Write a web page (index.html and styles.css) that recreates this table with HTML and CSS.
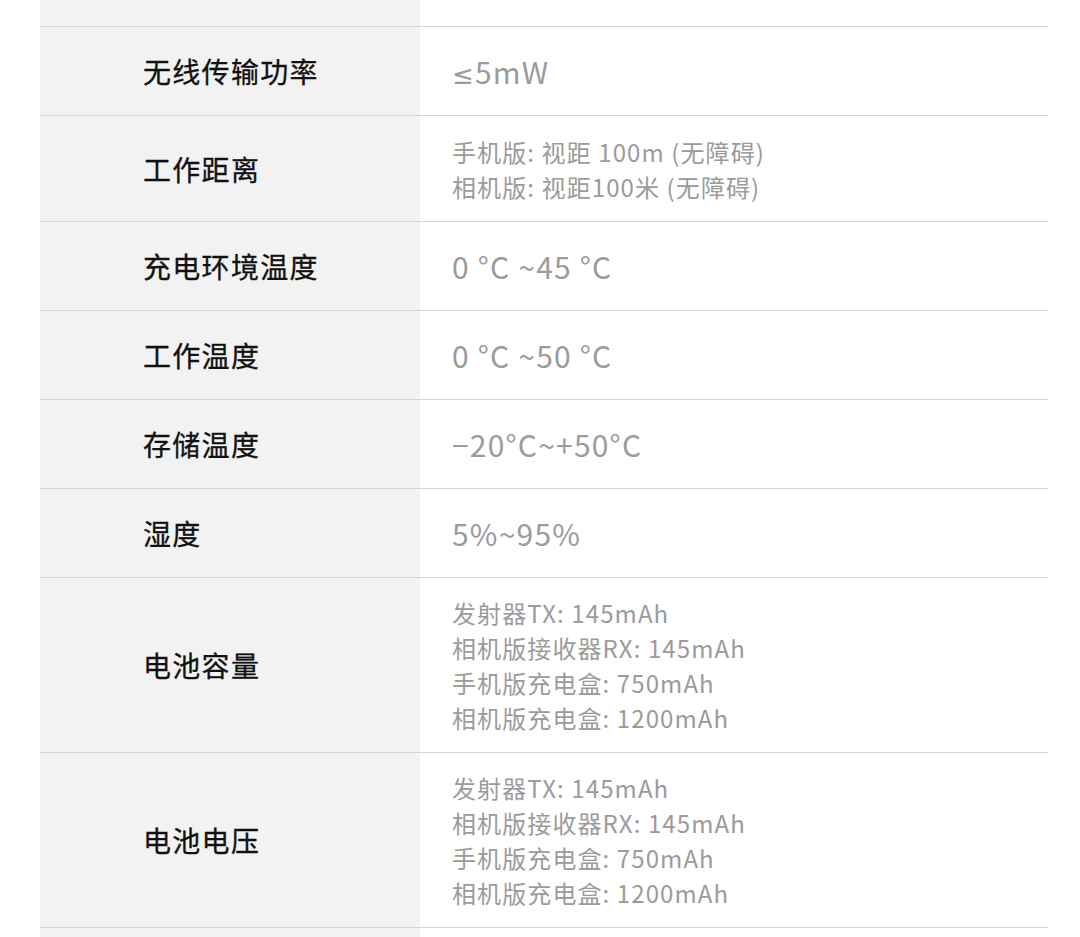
FILE: index.html
```html
<!DOCTYPE html>
<html lang="zh-CN">
<head>
<meta charset="utf-8">
<title>规格参数</title>
<link rel="stylesheet" href="styles.css">
</head>
<body>
<div class="specs">
  <div class="row row-top">
    <div class="label"></div>
    <div class="value"></div>
  </div>
  <div class="row">
    <div class="label">无线传输功率</div>
    <div class="value value-lg"><span><span class="sym">≤</span>5mW</span></div>
  </div>
  <div class="row row-2">
    <div class="label">工作距离</div>
    <div class="value value-sm">
      <div>手机版: 视距 100m (无障碍)</div>
      <div>相机版: 视距100米 (无障碍)</div>
    </div>
  </div>
  <div class="row">
    <div class="label">充电环境温度</div>
    <div class="value value-lg">0 °C ~45 °C</div>
  </div>
  <div class="row">
    <div class="label">工作温度</div>
    <div class="value value-lg">0 °C ~50 °C</div>
  </div>
  <div class="row">
    <div class="label">存储温度</div>
    <div class="value value-lg">−20°C~+50°C</div>
  </div>
  <div class="row">
    <div class="label">湿度</div>
    <div class="value value-lg">5%~95%</div>
  </div>
  <div class="row row-4">
    <div class="label">电池容量</div>
    <div class="value value-sm">
      <div>发射器TX: 145mAh</div>
      <div>相机版接收器RX: 145mAh</div>
      <div>手机版充电盒: 750mAh</div>
      <div>相机版充电盒: 1200mAh</div>
    </div>
  </div>
  <div class="row row-4">
    <div class="label">电池电压</div>
    <div class="value value-sm">
      <div>发射器TX: 145mAh</div>
      <div>相机版接收器RX: 145mAh</div>
      <div>手机版充电盒: 750mAh</div>
      <div>相机版充电盒: 1200mAh</div>
    </div>
  </div>
  <div class="row row-bottom">
    <div class="label"></div>
    <div class="value"></div>
  </div>
</div>
</body>
</html>
```
FILE: styles.css
```css
html, body {
  margin: 0;
  padding: 0;
  background: #ffffff;
}

body {
  font-family: "Noto Sans CJK SC", "Noto Sans", sans-serif;
  height: 937px;
  overflow: hidden;
}

.specs {
  margin-left: 40px;
  width: 1008px;
}

.row {
  display: grid;
  grid-template-columns: 380px 1fr;
  min-height: 88px;
  border-top: 1px solid #d6d6d6;
}

.row-top {
  min-height: 26px;
  border-top: none;
}

.row-2 {
  min-height: 105px;
}

.row-4 {
  min-height: 174px;
}

.row-bottom {
  min-height: 20px;
}

.label {
  background: #f2f2f2;
  display: flex;
  align-items: center;
  padding-left: 103px;
  font-size: 28px;
  font-weight: 400;
  letter-spacing: 1.3px;
  color: #111111;
  -webkit-text-stroke: 0.3px #111111;
}

.value {
  display: flex;
  flex-direction: column;
  justify-content: center;
  padding-left: 32px;
  color: #9b9b9b;
}

.value-lg {
  font-size: 30px;
  letter-spacing: 1.2px;
}

.value-sm {
  font-size: 24px;
  line-height: 35px;
  letter-spacing: 1.1px;
}

.sym {
  font-family: "DejaVu Sans", "Noto Sans", sans-serif;
  font-size: 26px;
}
```
